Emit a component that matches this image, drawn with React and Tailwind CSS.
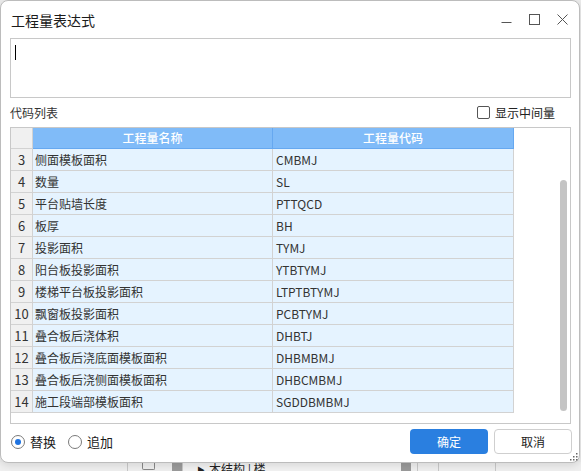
import React from "react";

const rows = [
  [3, "侧面模板面积", "CMBMJ"],
  [4, "数量", "SL"],
  [5, "平台贴墙长度", "PTTQCD"],
  [6, "板厚", "BH"],
  [7, "投影面积", "TYMJ"],
  [8, "阳台板投影面积", "YTBTYMJ"],
  [9, "楼梯平台板投影面积", "LTPTBTYMJ"],
  [10, "飘窗板投影面积", "PCBTYMJ"],
  [11, "叠合板后浇体积", "DHBTJ"],
  [12, "叠合板后浇底面模板面积", "DHBMBMJ"],
  [13, "叠合板后浇侧面模板面积", "DHBCMBMJ"],
  [14, "施工段端部模板面积", "SGDDBMBMJ"],
];

export default function App() {
  return (
    <div className="relative w-[581px] h-[471px] overflow-hidden bg-[#ececec] font-['Noto_Sans_CJK_SC','Noto_Sans',sans-serif] text-[#333]">
      {/* background app strip */}
      <div className="absolute left-0 right-0 top-[462px] h-[9px] flex text-[12px] text-[#222]">
        <div className="w-[128px] border-r border-[#c8c8c8] bg-[#efefef]" />
        <div className="w-[44px] bg-[#efefef] flex pl-[14px]">
          <div className="w-[13px] h-[8px] border border-[#888] border-t-0 rounded-b-[2px]" />
        </div>
        <div className="w-[10px] bg-[#9a9a9a]" />
        <div className="w-[219px] bg-[#f2f2f2] border-l border-[#c8c8c8] pl-[14px] leading-[14px] flex gap-[4px]">
          <span className="text-[8px] leading-[16px]">▶</span>
          <span>木结构 | 楼</span>
        </div>
        <div className="w-[10px] bg-[#9a9a9a]" />
        <div className="w-[7px] bg-[#efefef] border-r border-[#c8c8c8]" />
        <div className="w-[21px] bg-[#efefef] border-r border-[#c8c8c8]" />
        <div className="w-[57px] bg-[#efefef] border-r border-[#c8c8c8]" />
        <div className="flex-1 bg-[#efefef]" />
      </div>

      {/* dialog window */}
      <div className="absolute left-0 top-0 w-[580px] h-[463px] bg-white border border-[#bcbcbc] rounded-[8px] shadow-[0_2px_8px_rgba(0,0,0,0.12)] flex flex-col">
        {/* title bar */}
        <div className="h-[37px] flex items-center pl-[10px] pr-[3px]">
          <div className="text-[14px] text-[#1b1b1b] leading-none">工程量表达式</div>
          <div className="ml-auto flex items-center">
            <div className="w-[28px] h-[28px] flex items-center justify-center">
              <svg width="11" height="11" viewBox="0 0 11 11">
                <line x1="0.5" y1="8.5" x2="10.5" y2="8.5" stroke="#555" strokeWidth="1" />
              </svg>
            </div>
            <div className="w-[28px] h-[28px] flex items-center justify-center">
              <svg width="11" height="11" viewBox="0 0 11 11">
                <rect x="0.5" y="0.5" width="10" height="10" fill="none" stroke="#555" strokeWidth="1" />
              </svg>
            </div>
            <div className="w-[28px] h-[28px] flex items-center justify-center">
              <svg width="11" height="11" viewBox="0 0 11 11">
                <path d="M0.5 0.5 L10.5 10.5 M10.5 0.5 L0.5 10.5" stroke="#555" strokeWidth="1" />
              </svg>
            </div>
          </div>
        </div>

        {/* expression input */}
        <div className="ml-[9px] mr-[8px] h-[60px] border border-[#c8c8c8] relative">
          <div className="absolute left-[4px] top-[6px] w-[1px] h-[15px] bg-black" />
        </div>

        {/* list header row */}
        <div className="h-[29px] flex items-center pl-[9px] pr-[24px] text-[12px]">
          <span className="text-[#333]">代码列表</span>
          <label className="ml-auto flex items-center gap-[5px]">
            <span className="w-[13px] h-[13px] border border-[#555] rounded-[2px] bg-white" />
            <span className="text-[#222]">显示中间量</span>
          </label>
        </div>

        {/* table */}
        <div className="ml-[9px] mr-[8px] h-[297px] border border-[#c8c8c8] relative bg-white text-[12px]">
          <div className="grid grid-cols-[22px_240px_241px]">
            <div className="h-[21px] bg-[#f0f0f0] border-r border-b border-[#d2d2d2]" />
            <div className="h-[21px] bg-[#80bbf8] border-r border-b border-[#66a8f0] flex items-center justify-center text-white font-medium">工程量名称</div>
            <div className="h-[21px] bg-[#80bbf8] border-r border-b border-[#66a8f0] flex items-center justify-center text-white font-medium">工程量代码</div>
            {rows.map(([n, name, code]) => (
              <React.Fragment key={n}>
                <div className="h-[22px] bg-[#f0f0f0] border-r border-b border-[#d2d2d2] flex items-center justify-center text-[13px] text-[#333]">{n}</div>
                <div className="h-[22px] bg-[#e5f3ff] border-r border-b border-[#d2d2d2] flex items-center pl-[2px] text-[#333]">{name}</div>
                <div className="h-[22px] bg-[#e5f3ff] border-r border-b border-[#d2d2d2] flex items-center pl-[3px] text-[#333]">{code}</div>
              </React.Fragment>
            ))}
          </div>
          <div className="absolute right-[3px] top-[52px] w-[7px] h-[231px] rounded-full bg-[#c4c4c4]" />
        </div>

        {/* bottom row */}
        <div className="flex-1 flex items-start pt-[5px] pl-[10px] pr-[7px] text-[13px]">
          <div className="h-[25px] flex items-center gap-[12px]">
            <label className="flex items-center gap-[5px]">
              <span className="w-[14px] h-[14px] rounded-full border border-[#7a7a7a] bg-white flex items-center justify-center">
                <span className="w-[6px] h-[6px] rounded-full bg-[#1f73e0]" />
              </span>
              <span className="text-[#1b1b1b]">替换</span>
            </label>
            <label className="flex items-center gap-[5px]">
              <span className="w-[14px] h-[14px] rounded-full border border-[#7a7a7a] bg-white" />
              <span className="text-[#1b1b1b]">追加</span>
            </label>
          </div>
          <div className="ml-auto flex gap-[6px]">
            <button className="w-[78px] h-[25px] rounded-[4px] bg-[#2a7fe0] text-white text-[12px]">确定</button>
            <button className="w-[78px] h-[25px] rounded-[4px] bg-white border border-[#cfcfcf] text-[#1b1b1b] text-[12px]">取消</button>
          </div>
        </div>

        {/* resize grip */}
        <svg className="absolute right-[1px] bottom-[1px]" width="9" height="9" viewBox="0 0 9 9">
          <rect x="7" y="1" width="1.5" height="1.5" fill="#666" />
          <rect x="4" y="4" width="1.5" height="1.5" fill="#666" />
          <rect x="7" y="4" width="1.5" height="1.5" fill="#666" />
          <rect x="1" y="7" width="1.5" height="1.5" fill="#666" />
          <rect x="4" y="7" width="1.5" height="1.5" fill="#666" />
          <rect x="7" y="7" width="1.5" height="1.5" fill="#666" />
        </svg>
      </div>
    </div>
  );
}
